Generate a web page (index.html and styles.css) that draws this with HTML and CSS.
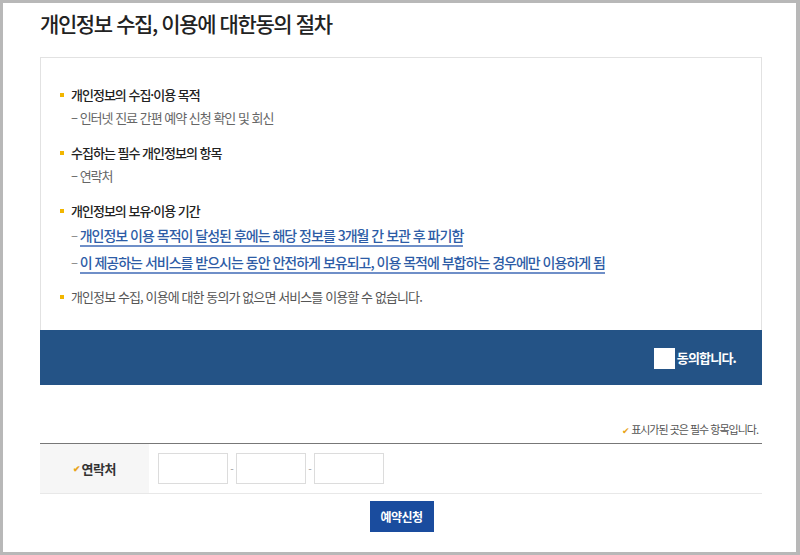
FILE: index.html
```html
<!DOCTYPE html>
<html lang="ko">
<head>
<meta charset="utf-8">
<title>개인정보 수집, 이용에 대한동의 절차</title>
<link rel="stylesheet" href="styles.css">
</head>
<body>
<div class="page">
  <h1 class="title">개인정보 수집, 이용에 대한동의 절차</h1>

  <div class="agree-box">
    <div class="terms">
      <div class="group">
        <p class="head">개인정보의 수집·이용 목적</p>
        <p class="sub">– 인터넷 진료 간편 예약 신청 확인 및 회신</p>
      </div>
      <div class="group">
        <p class="head">수집하는 필수 개인정보의 항목</p>
        <p class="sub">– 연락처</p>
      </div>
      <div class="group">
        <p class="head">개인정보의 보유·이용 기간</p>
        <p class="sub link-line">– <span class="link">개인정보 이용 목적이 달성된 후에는 해당 정보를 3개월 간 보관 후 파기함</span></p>
        <p class="sub link-line">– <span class="link">이 제공하는 서비스를 받으시는 동안 안전하게 보유되고, 이용 목적에 부합하는 경우에만 이용하게 됨</span></p>
      </div>
      <div class="group last">
        <p class="head normal">개인정보 수집, 이용에 대한 동의가 없으면 서비스를 이용할 수 없습니다.</p>
      </div>
    </div>
    <div class="agree-bar">
      <label class="agree-label"><span class="checkbox"></span>동의합니다.</label>
    </div>
  </div>

  <p class="required-note"><span class="check">✔</span>표시가된 곳은 필수 항목입니다.</p>

  <div class="form-table">
    <div class="form-row">
      <div class="form-label"><span class="check">✔</span>연락처</div>
      <div class="form-field">
        <span class="input"></span>
        <span class="sep">-</span>
        <span class="input"></span>
        <span class="sep">-</span>
        <span class="input"></span>
      </div>
    </div>
  </div>

  <div class="actions">
    <button class="submit" type="button">예약신청</button>
  </div>
</div>
</body>
</html>
```

FILE: styles.css
```css
* { box-sizing: border-box; }

html, body {
  margin: 0;
  padding: 0;
}

body {
  background: #b8b8b8;
  padding: 3px 4px 3px 3px;
  font-family: "Noto Sans CJK KR", "Noto Sans", sans-serif;
  color: #222;
}

.page {
  background: #fff;
  height: 549px;
  padding: 5px 34px 0 37px;
}

.title {
  margin: 0;
  font-size: 21px;
  line-height: 30px;
  font-weight: 500;
  letter-spacing: -1.4px;
  color: #222;
}

.agree-box {
  margin-top: 19px;
  width: 722px;
}

.terms {
  border: 1px solid #e2e2e2;
  border-bottom: 0;
  padding: 25px 0 22px 18px;
}

.group { margin-bottom: 12px; }
.group.last { margin-top: -3px; margin-bottom: 0; }

.terms p {
  margin: 0;
  font-size: 13px;
  line-height: 23px;
  letter-spacing: -1px;
}

.head {
  position: relative;
  padding-left: 12px;
  font-weight: 500;
  color: #222;
}

.head::before {
  content: "";
  position: absolute;
  left: 1px;
  top: 10px;
  width: 4px;
  height: 4px;
  background: #f2b600;
}

.head.normal {
  font-weight: 400;
  color: #555;
  letter-spacing: -0.9px;
}

.sub {
  padding-left: 12px;
  color: #666;
}

.sub.link-line {
  line-height: 27px;
  color: #888;
}

.link {
  color: #2d5ca6;
  font-size: 14px;
  font-weight: 500;
  border-bottom: 2px solid #6f8fc8;
}

.agree-bar {
  background: #245386;
  height: 55px;
  display: flex;
  align-items: center;
  justify-content: flex-end;
  padding-right: 26px;
}

.agree-label {
  display: flex;
  align-items: center;
  color: #fff;
  font-size: 13px;
  font-weight: 700;
  letter-spacing: -0.8px;
}

.checkbox {
  width: 21px;
  height: 21px;
  background: #fff;
  margin-right: 2px;
  margin-top: 2px;
}

.required-note {
  margin: 35px 0 0;
  width: 722px;
  text-align: right;
  padding-right: 4px;
  font-size: 11px;
  line-height: 18px;
  letter-spacing: -1px;
  color: #555;
}

.check {
  color: #e8a41a;
  font-size: 9px;
  margin-right: 2px;
}

.form-table {
  margin-top: 3px;
  width: 722px;
  border-top: 1px solid #777;
  border-bottom: 1px solid #e8e8e8;
}

.form-row {
  display: flex;
  height: 49px;
}

.form-label {
  width: 110px;
  background: #f6f6f6;
  border-right: 1px solid #fff;
  display: flex;
  align-items: center;
  justify-content: center;
  font-size: 13px;
  font-weight: 700;
  color: #333;
  letter-spacing: -0.5px;
}

.form-label .check { font-size: 9px; margin-right: 1px; }

.form-field {
  display: flex;
  align-items: center;
  padding-left: 8px;
}

.input {
  width: 70px;
  height: 31px;
  border: 1px solid #dcdcdc;
  background: #fff;
}

.sep {
  width: 8px;
  text-align: center;
  font-size: 10px;
  color: #999;
}

.actions {
  display: flex;
  justify-content: center;
  margin-top: 7px;
  padding-left: 1px;
}

.submit {
  width: 64px;
  height: 31px;
  border: 0;
  background: #1a4c9e;
  color: #fff;
  font-family: "Noto Sans CJK KR", "Noto Sans", sans-serif;
  font-size: 12px;
  font-weight: 700;
  letter-spacing: -0.5px;
  padding: 0;
}
```
